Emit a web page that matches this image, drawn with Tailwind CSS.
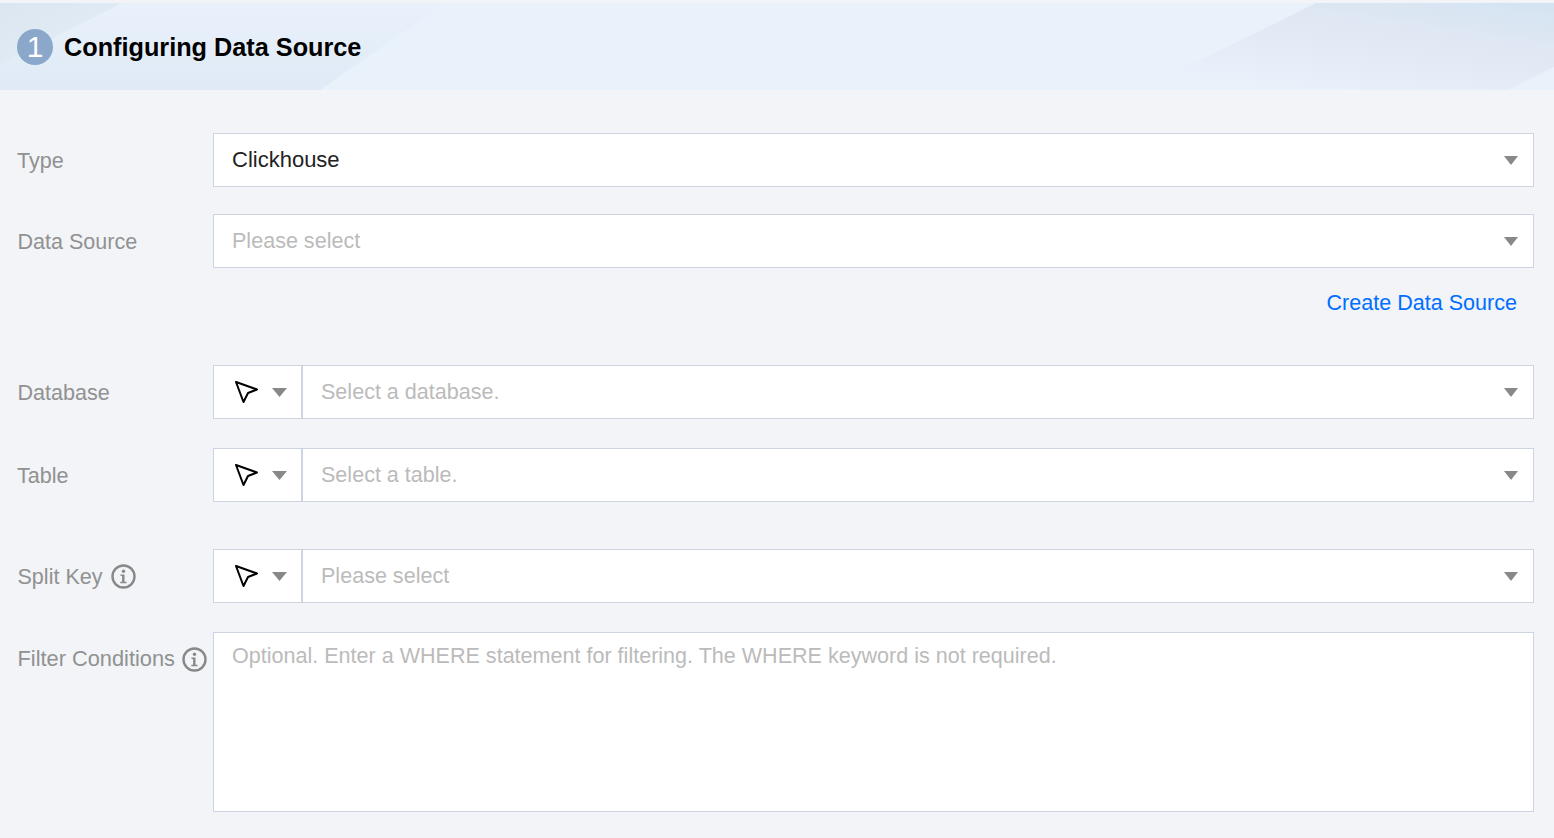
<!DOCTYPE html>
<html lang="en">
  <head>
    <meta charset="UTF-8" />
    <meta name="viewport" content="width=device-width, initial-scale=1.0" />
    <script src="https://cdn.jsdelivr.net/npm/@tailwindcss/browser@4"></script>
    <title>Configuring Data Source</title>
  </head>
  <body class="bg-[#f2f4f8] font-['Liberation_Sans',Arial,sans-serif] h-[838px] overflow-hidden">
    <!-- step banner -->
    <div class="relative mt-[3px] h-[87px] bg-[#e9f1fb] overflow-hidden flex items-center pl-[17px] gap-[11px]">
      <svg class="absolute inset-0" width="1554" height="87" viewBox="0 0 1554 87">
        <defs>
          <linearGradient id="leftWedge" x1="0" y1="0" x2="1" y2="1">
            <stop offset="0" stop-color="#dbe6f1" />
            <stop offset="1" stop-color="#e5eef8" />
          </linearGradient>
          <linearGradient id="leftBand" x1="0" y1="0" x2="0" y2="1">
            <stop offset="0" stop-color="#e9f1fb" />
            <stop offset="1" stop-color="#dfeaf6" />
          </linearGradient>
          <linearGradient id="rightBand" x1="1" y1="0" x2="0.3" y2="1">
            <stop offset="0" stop-color="#d4e3f1" />
            <stop offset="0.5" stop-color="#e3e9f4" />
            <stop offset="1" stop-color="#e9f1fb" />
          </linearGradient>
        </defs>
        <polygon points="0,87 320,87 445,0 122,0 0,62" fill="url(#leftBand)" />
        <polygon points="0,0 122,0 0,62" fill="url(#leftWedge)" />
        <polygon points="1316,0 1554,0 1554,64 1508,87 1140,87" fill="url(#rightBand)" />
      </svg>
      <span class="relative w-[36px] h-[36px] rounded-full bg-[#8ba8cb] text-white text-[30px] leading-[36px] text-center">1</span>
      <h2 class="relative text-[25.25px] font-bold text-black pt-[2px]">Configuring Data Source</h2>
    </div>

    <!-- form -->
    <div class="pl-[17px] pr-[20px] pt-[43px] text-[21.55px]">
      <div class="flex items-center h-[54px]">
        <label class="w-[196px] text-[#919191] pt-[2px]">Type</label>
        <div class="flex-1 h-full flex items-center justify-between bg-white border border-[#cdd3e0] pl-[18px] pr-[15px] text-[#222222]">
          <span class="text-[22px] pb-[2px]">Clickhouse</span>
          <svg width="14" height="9" viewBox="0 0 14 9"><polygon points="0,0 14,0 7,9" fill="#888888" /></svg>
        </div>
      </div>

      <div class="flex items-center h-[54px] mt-[27px]">
        <label class="w-[196px] pl-[0.5px] text-[#919191] pt-[2px]">Data Source</label>
        <div class="flex-1 h-full flex items-center justify-between bg-white border border-[#cdd3e0] pl-[18px] pr-[15px] text-[#bbbbbb]">
          <span>Please select</span>
          <svg width="14" height="9" viewBox="0 0 14 9"><polygon points="0,0 14,0 7,9" fill="#888888" /></svg>
        </div>
      </div>

      <div class="flex justify-end pr-[17px] mt-[21px] h-[28px] leading-[28px]">
        <a href="#" class="text-[#006eff]">Create Data Source</a>
      </div>

      <div class="flex items-center h-[54px] mt-[48px]">
        <label class="w-[196px] pl-[0.5px] text-[#919191] pt-[2px]">Database</label>
        <div class="flex-1 h-full flex bg-white border border-[#cdd3e0]">
          <div class="w-[89px] flex items-center gap-[14px] pl-[20px] border-r-2 border-[#cdd3e0]">
            <svg width="24" height="24" viewBox="0 0 24 24"><polygon points="2,2 23,9.5 14,13 9.5,22" fill="none" stroke="#000" stroke-width="2" stroke-linejoin="round" /></svg>
            <svg width="15" height="9" viewBox="0 0 15 9"><polygon points="0,0 15,0 7.5,9" fill="#888888" /></svg>
          </div>
          <div class="flex-1 flex items-center justify-between pl-[18px] pr-[15px] text-[#bbbbbb]">
            <span>Select a database.</span>
            <svg width="14" height="9" viewBox="0 0 14 9"><polygon points="0,0 14,0 7,9" fill="#888888" /></svg>
          </div>
        </div>
      </div>

      <div class="flex items-center h-[54px] mt-[29px]">
        <label class="w-[196px] text-[#919191] pt-[2px]">Table</label>
        <div class="flex-1 h-full flex bg-white border border-[#cdd3e0]">
          <div class="w-[89px] flex items-center gap-[14px] pl-[20px] border-r-2 border-[#cdd3e0]">
            <svg width="24" height="24" viewBox="0 0 24 24"><polygon points="2,2 23,9.5 14,13 9.5,22" fill="none" stroke="#000" stroke-width="2" stroke-linejoin="round" /></svg>
            <svg width="15" height="9" viewBox="0 0 15 9"><polygon points="0,0 15,0 7.5,9" fill="#888888" /></svg>
          </div>
          <div class="flex-1 flex items-center justify-between pl-[18px] pr-[15px] text-[#bbbbbb]">
            <span>Select a table.</span>
            <svg width="14" height="9" viewBox="0 0 14 9"><polygon points="0,0 14,0 7,9" fill="#888888" /></svg>
          </div>
        </div>
      </div>

      <div class="flex items-center h-[54px] mt-[47px]">
        <label class="w-[196px] pl-[0.5px] flex items-center gap-[8px] text-[#919191] pt-[2px]">
          Split Key
          <svg class="-mt-[2px]" width="25" height="25" viewBox="0 0 25 25"><circle cx="12.5" cy="12.5" r="11" fill="none" stroke="#888888" stroke-width="2.4" /><circle cx="12.5" cy="7.2" r="1.7" fill="#888888" /><path d="M9.5 10.5h4v7.2h2v1.6h-6.2v-1.6h1.8v-5.6h-1.6z" fill="#888888" /></svg>
        </label>
        <div class="flex-1 h-full flex bg-white border border-[#cdd3e0]">
          <div class="w-[89px] flex items-center gap-[14px] pl-[20px] border-r-2 border-[#cdd3e0]">
            <svg width="24" height="24" viewBox="0 0 24 24"><polygon points="2,2 23,9.5 14,13 9.5,22" fill="none" stroke="#000" stroke-width="2" stroke-linejoin="round" /></svg>
            <svg width="15" height="9" viewBox="0 0 15 9"><polygon points="0,0 15,0 7.5,9" fill="#888888" /></svg>
          </div>
          <div class="flex-1 flex items-center justify-between pl-[18px] pr-[15px] text-[#bbbbbb]">
            <span>Please select</span>
            <svg width="14" height="9" viewBox="0 0 14 9"><polygon points="0,0 14,0 7,9" fill="#888888" /></svg>
          </div>
        </div>
      </div>

      <div class="flex items-start h-[180px] mt-[29px]">
        <label class="w-[196px] pl-[0.5px] flex items-center gap-[7px] text-[21.8px] text-[#919191] whitespace-nowrap mt-[11px]">
          Filter Conditions
          <svg width="25" height="25" viewBox="0 0 25 25"><circle cx="12.5" cy="12.5" r="11" fill="none" stroke="#888888" stroke-width="2.4" /><circle cx="12.5" cy="7.2" r="1.7" fill="#888888" /><path d="M9.5 10.5h4v7.2h2v1.6h-6.2v-1.6h1.8v-5.6h-1.6z" fill="#888888" /></svg>
        </label>
        <div class="flex-1 h-full bg-white border border-[#cdd3e0] pl-[18px] pr-[15px] pt-[7px] text-[#bbbbbb]">
          Optional. Enter a WHERE statement for filtering. The WHERE keyword is not required.
        </div>
      </div>
    </div>
  </body>
</html>
